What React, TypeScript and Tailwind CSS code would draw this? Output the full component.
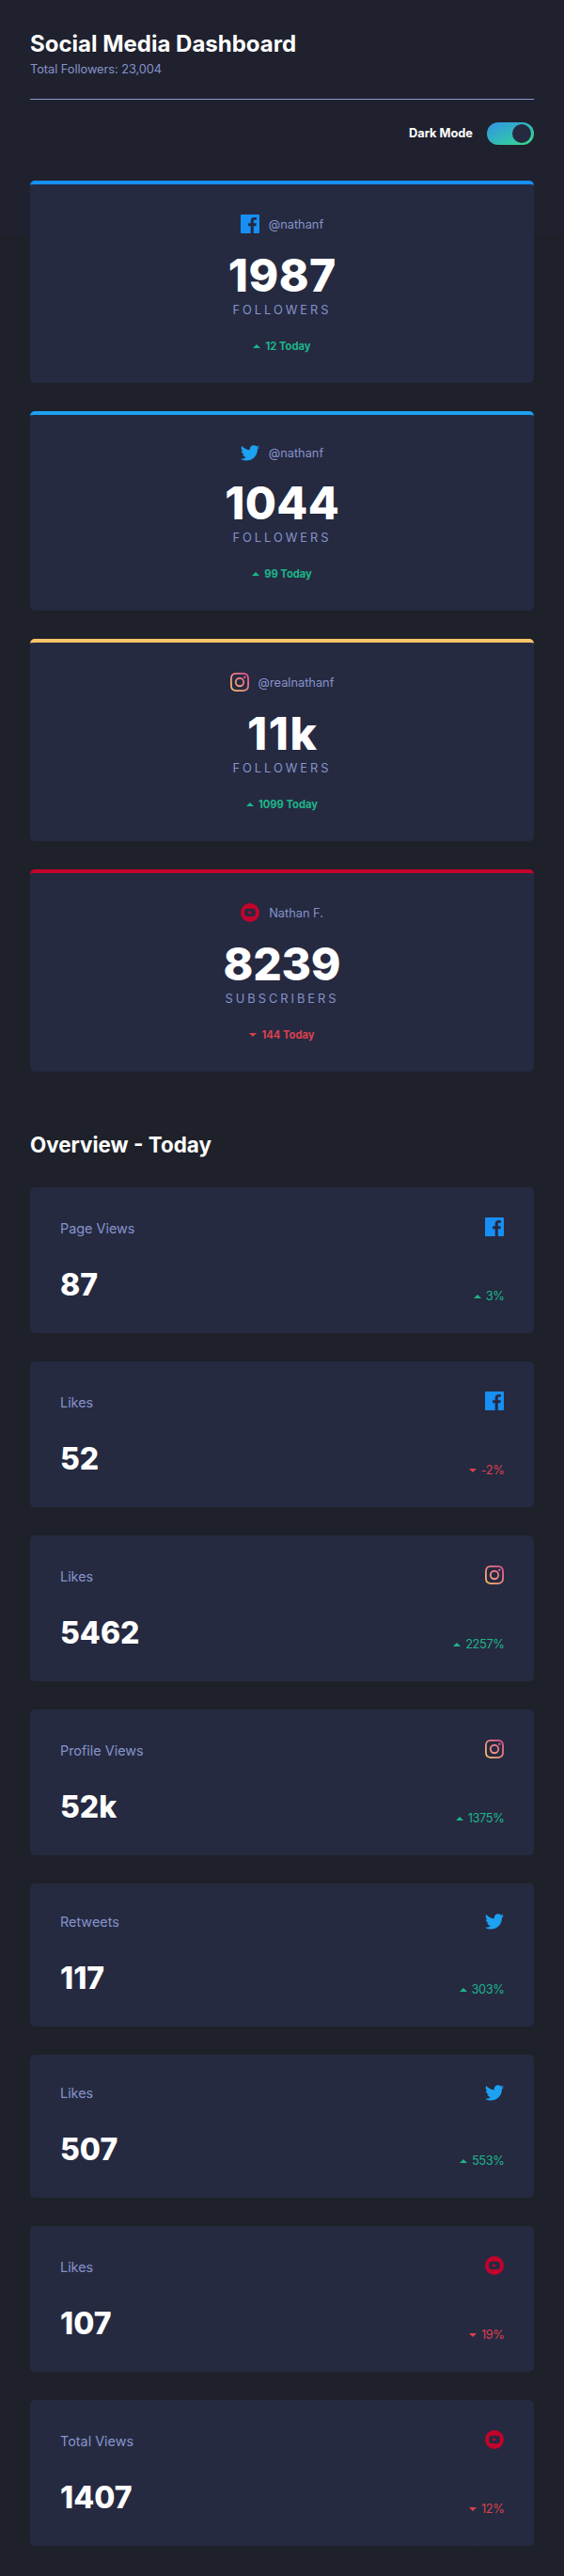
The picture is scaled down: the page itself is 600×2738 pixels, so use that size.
import React from "react";

type Brand = "facebook" | "twitter" | "instagram" | "youtube";

function BrandIcon({ brand, id }: { brand: Brand; id: string }) {
  if (brand === "facebook") {
    return (
      <svg className="block shrink-0" width="20" height="20" viewBox="0 0 20 20">
        <path
          fill="#178FF5"
          d="M18.896 0H1.104C.494 0 0 .494 0 1.104v17.793C0 19.506.494 20 1.104 20h9.58v-7.745H8.076V9.237h2.606V7.01c0-2.583 1.578-3.99 3.883-3.99 1.104 0 2.052.082 2.329.119v2.7h-1.598c-1.254 0-1.496.597-1.496 1.47v1.928h2.989l-.39 3.018h-2.6V20h5.098c.608 0 1.102-.494 1.102-1.104V1.104C20 .494 19.506 0 18.896 0z"
        />
      </svg>
    );
  }
  if (brand === "twitter") {
    return (
      <svg className="block shrink-0" width="20" height="17" viewBox="0 0 20 17">
        <path
          fill="#1DA1F2"
          d="M20 2.172a8.192 8.192 0 01-2.357.646 4.11 4.11 0 001.805-2.27 8.22 8.22 0 01-2.606.996A4.096 4.096 0 0013.847.248c-2.65 0-4.596 2.472-3.998 5.037A11.648 11.648 0 011.392 1a4.109 4.109 0 001.27 5.478 4.086 4.086 0 01-1.858-.513c-.045 1.9 1.318 3.679 3.291 4.075a4.113 4.113 0 01-1.853.07 4.106 4.106 0 003.833 2.849A8.25 8.25 0 010 14.658a11.616 11.616 0 006.29 1.843c7.618 0 11.922-6.434 11.662-12.205A8.354 8.354 0 0020 2.172z"
        />
      </svg>
    );
  }
  if (brand === "instagram") {
    return (
      <svg className="block shrink-0" width="20" height="20" viewBox="0 0 20 20">
        <defs>
          <linearGradient id={id} x1="0%" x2="100%" y1="100%" y2="0%">
            <stop offset="0%" stopColor="#FDC468" />
            <stop offset="100%" stopColor="#DF4996" />
          </linearGradient>
        </defs>
        <path
          fill={`url(#${id})`}
          d="M10 1.802c2.67 0 2.987.01 4.042.059 2.71.123 3.975 1.409 4.099 4.099.048 1.054.057 1.37.057 4.04 0 2.672-.01 2.988-.057 4.042-.124 2.687-1.387 3.975-4.1 4.099-1.054.048-1.37.058-4.041.058-2.67 0-2.987-.01-4.04-.058-2.717-.124-3.977-1.416-4.1-4.1-.048-1.054-.058-1.37-.058-4.041 0-2.67.01-2.986.058-4.04.124-2.69 1.387-3.977 4.1-4.1 1.054-.048 1.37-.058 4.04-.058zM10 0C7.284 0 6.944.012 5.878.06 2.246.227.228 2.242.061 5.877.01 6.944 0 7.284 0 10s.012 3.057.06 4.123c.167 3.632 2.182 5.65 5.817 5.817 1.067.048 1.407.06 4.123.06s3.057-.012 4.123-.06c3.629-.167 5.652-2.182 5.816-5.817.05-1.066.061-1.407.061-4.123s-.012-3.056-.06-4.122C19.777 2.249 17.76.228 14.124.06 13.057.01 12.716 0 10 0zm0 4.865a5.135 5.135 0 100 10.27 5.135 5.135 0 000-10.27zm0 8.468a3.333 3.333 0 110-6.666 3.333 3.333 0 010 6.666zm5.338-9.87a1.2 1.2 0 100 2.4 1.2 1.2 0 000-2.4z"
        />
      </svg>
    );
  }
  return (
    <svg className="block shrink-0" width="20" height="20" viewBox="0 0 20 20">
      <path
        fill="#C4032B"
        fillRule="evenodd"
        d="M10 0a10 10 0 100 20 10 10 0 000-20zm3.701 14.077c-1.752.12-5.653.12-7.402 0C4.402 13.947 4.182 13.023 4.167 10c.015-3.024.237-3.947 2.132-4.077 1.749-.12 5.651-.12 7.402 0 1.898.13 2.117 1.054 2.133 4.077-.015 3.024-.237 3.946-2.133 4.077zM8.334 8.048l4.097 1.949-4.097 1.955V8.048z"
      />
    </svg>
  );
}

function Arrow({ up }: { up: boolean }) {
  return (
    <svg className="block shrink-0" width="8" height="4" viewBox="0 0 8 4">
      {up ? <path fill="#1EB589" d="M0 4L4 0l4 4z" /> : <path fill="#DC414C" d="M0 0l4 4 4-4z" />}
    </svg>
  );
}

const followers: {
  brand: Brand;
  name: string;
  count: string;
  tracking: string;
  unit: string;
  today: string;
  up: boolean;
  edge: string;
}[] = [
  { brand: "facebook", name: "@nathanf", count: "1987", tracking: "tracking-[0.5px] -mr-[0.5px]", unit: "FOLLOWERS", today: "12", up: true, edge: "border-[#178ff5]" },
  { brand: "twitter", name: "@nathanf", count: "1044", tracking: "tracking-[0.4px] -mr-[0.4px]", unit: "FOLLOWERS", today: "99", up: true, edge: "border-[#1da1f2]" },
  { brand: "instagram", name: "@realnathanf", count: "11k", tracking: "tracking-[1.5px] -mr-[1.5px]", unit: "FOLLOWERS", today: "1099", up: true, edge: "border-[#fdc468]" },
  { brand: "youtube", name: "Nathan F.", count: "8239", tracking: "tracking-[-0.3px] -mr-[-0.3px]", unit: "SUBSCRIBERS", today: "144", up: false, edge: "border-[#c4032b]" },
];

const overview: { label: string; brand: Brand; value: string; change: string; up: boolean }[] = [
  { label: "Page Views", brand: "facebook", value: "87", change: "3%", up: true },
  { label: "Likes", brand: "facebook", value: "52", change: "-2%", up: false },
  { label: "Likes", brand: "instagram", value: "5462", change: "2257%", up: true },
  { label: "Profile Views", brand: "instagram", value: "52k", change: "1375%", up: true },
  { label: "Retweets", brand: "twitter", value: "117", change: "303%", up: true },
  { label: "Likes", brand: "twitter", value: "507", change: "553%", up: true },
  { label: "Likes", brand: "youtube", value: "107", change: "19%", up: false },
  { label: "Total Views", brand: "youtube", value: "1407", change: "12%", up: false },
];

export default function App() {
  return (
    <div className="min-h-[2738px] bg-[#1e2129] bg-linear-to-b from-[#1f212e] from-[250px] to-[#1e2129] to-[250px] px-8 pb-8 font-['Inter',sans-serif] text-[#8693ca]">
      <header className="pt-8">
        <h1 className="text-[24px] leading-[29px] font-bold text-white">Social Media Dashboard</h1>
        <p className="mt-1 text-[12.8px] leading-[18px] tracking-[-0.05px]">Total Followers: 23,004</p>
        <div className="mt-[22px] h-px bg-[#8b97c6]" />
        <div className="mt-6 flex h-6 items-center justify-end gap-[15px]">
          <span className="text-[12.8px] font-bold text-white">Dark Mode</span>
          <button aria-label="Dark Mode" className="flex h-6 w-[50px] items-center justify-end rounded-full bg-linear-to-br from-[#378fe6] to-[#3eda82] pr-[3px]">
            <span className="block size-5 rounded-full bg-[#252a41]" />
          </button>
        </div>
      </header>

      <section className="mt-[38px] flex flex-col gap-[30px]">
        {followers.map((f) => (
          <article key={f.brand} className={`flex flex-col items-center rounded-[5px] border-t-4 bg-[#252a41] pt-8 pb-[31px] ${f.edge}`}>
            <div className="flex items-center gap-[10px]">
              <BrandIcon brand={f.brand} id={`follow-${f.brand}`} />
              <span className="text-[12.8px] leading-[17px]">{f.name}</span>
            </div>
            <div className={`mt-[21px] text-[48px] leading-[48px] font-extrabold text-white ${f.tracking}`}>{f.count}</div>
            <div className="mt-[5px] text-[12.8px] leading-4 tracking-[3px]">{f.unit}</div>
            <div className={`mt-[22px] flex h-4 items-center gap-[5px] text-[11.2px] font-bold ${f.up ? "text-[#1eb589]" : "text-[#dc414c]"}`}>
              <Arrow up={f.up} />
              <span>{f.today} Today</span>
            </div>
          </article>
        ))}
      </section>

      <h2 className="mt-[62px] text-[22.4px] leading-[32px] font-bold text-white">Overview - Today</h2>

      <section className="mt-[29px] flex flex-col gap-[30px]">
        {overview.map((o, i) => (
          <article key={i} className="rounded-[5px] bg-[#252a41] p-8">
            <div className="flex items-end justify-between">
              <span className="text-[14.4px] leading-[17px]">{o.label}</span>
              <BrandIcon brand={o.brand} id={`overview-${i}`} />
            </div>
            <div className="mt-8 flex items-end justify-between">
              <span className="text-[32px] leading-[39px] font-extrabold text-white">{o.value}</span>
              <span className={`flex items-center gap-[5px] text-[12.8px] leading-[15px] ${o.up ? "text-[#1eb589]" : "text-[#dc414c]"}`}>
                <span className="mt-px">
                  <Arrow up={o.up} />
                </span>
                <span className="-mr-[0.4px] tracking-[-0.4px]">{o.change}</span>
              </span>
            </div>
          </article>
        ))}
      </section>
    </div>
  );
}
